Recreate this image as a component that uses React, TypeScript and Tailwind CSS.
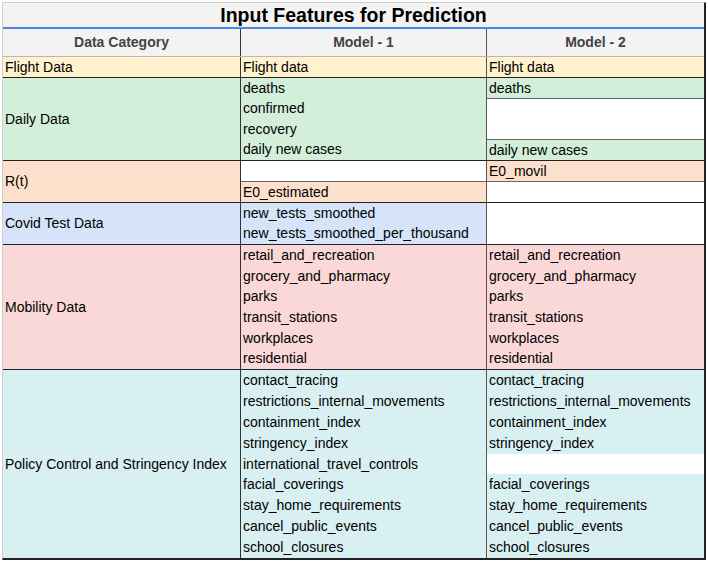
import React from "react";

type Cell = { t?: string; span?: number; bg: string; line?: boolean };
type Group = { label: string; h: string; bg: string; c2: Cell[]; c3: Cell[] };

const Y = "bg-[#fff2cc]";
const G = "bg-[#d3efda]";
const O = "bg-[#fde0cc]";
const B = "bg-[#d5e4f8]";
const P = "bg-[#fad8d8]";
const C = "bg-[#d8f0f2]";
const W = "bg-white";

const rows = (items: string[], bg: string): Cell[] => items.map((t) => ({ t, bg }));

const mobility = [
  "retail_and_recreation",
  "grocery_and_pharmacy",
  "parks",
  "transit_stations",
  "workplaces",
  "residential",
];

const groups: Group[] = [
  {
    label: "Flight Data",
    h: "h-[21px]",
    bg: Y,
    c2: [{ t: "Flight data", bg: Y }],
    c3: [{ t: "Flight data", bg: Y }],
  },
  {
    label: "Daily Data",
    h: "h-[83px]",
    bg: G,
    c2: rows(["deaths", "confirmed", "recovery", "daily new cases"], G),
    c3: [
      { t: "deaths", bg: G },
      { span: 2, bg: W, line: true },
      { t: "daily new cases", bg: G, line: true },
    ],
  },
  {
    label: "R(t)",
    h: "h-[42px]",
    bg: O,
    c2: [
      { bg: W },
      { t: "E0_estimated", bg: O, line: true },
    ],
    c3: [
      { t: "E0_movil", bg: O },
      { bg: W, line: true },
    ],
  },
  {
    label: "Covid Test Data",
    h: "h-[42px]",
    bg: B,
    c2: rows(["new_tests_smoothed", "new_tests_smoothed_per_thousand"], B),
    c3: [{ span: 2, bg: W }],
  },
  {
    label: "Mobility Data",
    h: "h-[125px]",
    bg: P,
    c2: rows(mobility, P),
    c3: rows(mobility, P),
  },
  {
    label: "Policy Control and Stringency Index",
    h: "h-[188px]",
    bg: C,
    c2: rows(
      [
        "contact_tracing",
        "restrictions_internal_movements",
        "containment_index",
        "stringency_index",
        "international_travel_controls",
        "facial_coverings",
        "stay_home_requirements",
        "cancel_public_events",
        "school_closures",
      ],
      C
    ),
    c3: [
      ...rows(
        ["contact_tracing", "restrictions_internal_movements", "containment_index", "stringency_index"],
        C
      ),
      { bg: W },
      ...rows(["facial_coverings", "stay_home_requirements", "cancel_public_events", "school_closures"], C),
    ],
  },
];

function Column({ cells }: { cells: Cell[] }) {
  return (
    <div className="flex flex-col h-full">
      {cells.map((c, i) => (
        <div
          key={i}
          className={`${c.bg} ${c.span === 2 ? "flex-[2_2_0%]" : "flex-[1_1_0%]"} ${
            c.line ? "border-t border-[#666]" : ""
          } flex items-center px-[2px] whitespace-nowrap overflow-hidden`}
        >
          {c.t ?? ""}
        </div>
      ))}
    </div>
  );
}

export default function App() {
  return (
    <div
      className="w-[708px] h-[562px] bg-white pt-[2px] pl-[2px] text-[14px] leading-[21px] text-black"
      style={{ fontFamily: '"Liberation Sans", Arial, sans-serif' }}
    >
      <div className="w-[704px] border-t border-l border-[#cfcfcf] border-r-2 border-b-2 border-r-[#222] border-b-[#222]">
        <div className="h-[24px] bg-[#f3f3f3] flex items-center justify-center font-bold text-[19.5px] leading-[24px]">
          Input Features for Prediction
        </div>
        <div className="h-[2px] bg-[#4a86e8]" />
        <div className="h-[28px] bg-[#f3f3f3] flex border-b border-[#b7b7b7] font-bold text-[#434343]">
          <div className="w-[238px] border-r border-[#333] flex items-center justify-center">Data Category</div>
          <div className="w-[246px] border-r border-[#555] flex items-center justify-center">Model - 1</div>
          <div className="flex-1 flex items-center justify-center">Model - 2</div>
        </div>
        {groups.map((g, i) => (
          <div
            key={i}
            className={`${g.h} flex ${i < groups.length - 1 ? "border-b border-[#222]" : ""}`}
          >
            <div className={`w-[238px] border-r border-[#333] ${g.bg} flex items-center px-[2px]`}>
              {g.label}
            </div>
            <div className="w-[246px] border-r border-[#555]">
              <Column cells={g.c2} />
            </div>
            <div className="flex-1">
              <Column cells={g.c3} />
            </div>
          </div>
        ))}
      </div>
    </div>
  );
}
